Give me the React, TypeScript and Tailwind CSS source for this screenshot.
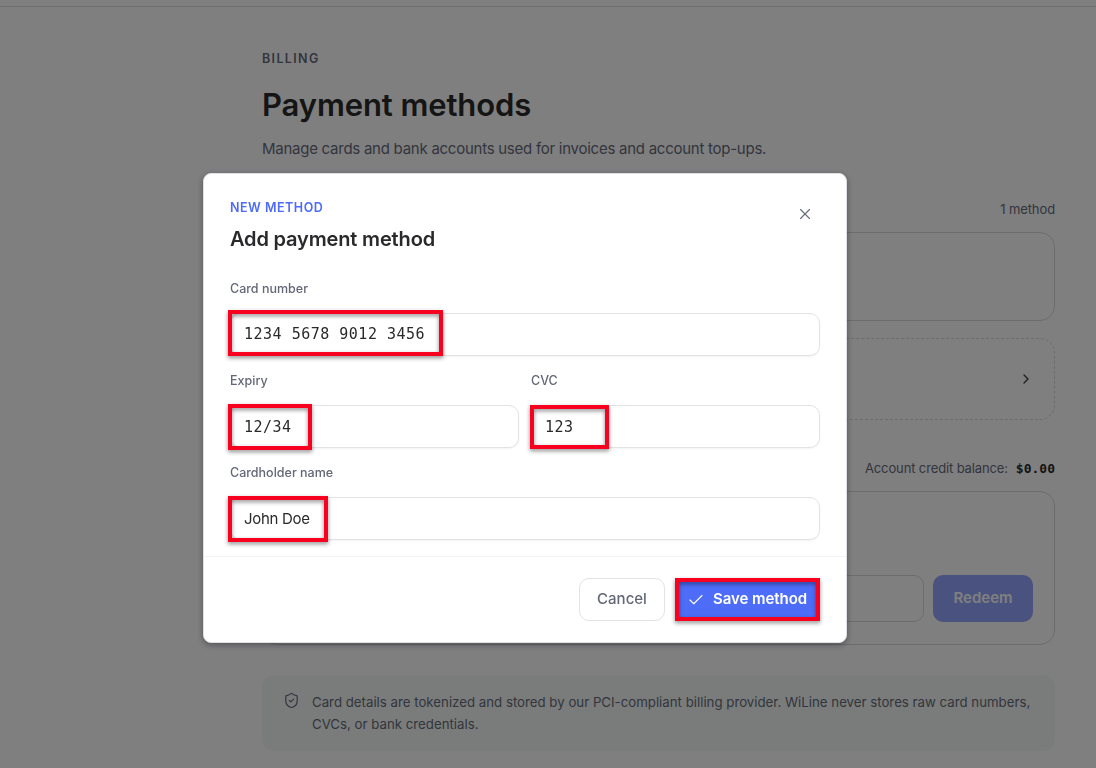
import type { ReactNode } from "react"
import { Check, ChevronRight, ShieldCheck, X } from "lucide-react"

function Highlight({ className }: { className: string }) {
  return (
    <div
      className={`pointer-events-none absolute border-4 border-[#f80020] drop-shadow-[0_2px_2px_rgba(0,0,0,0.45)] ${className}`}
    />
  )
}

function Field({ label, value, valueClass, children }: { label: ReactNode; value: string; valueClass: string; children: ReactNode }) {
  return (
    <div className="relative flex-1">
      <div className="h-[34px] pt-px text-[12.5px] leading-[18px] font-medium text-[#626776]">{label}</div>
      <div className="flex h-[43px] items-center rounded-[10px] border border-[#e2e2e7] px-[13px] text-[#2a2a2c] shadow-[0_1px_2px_rgba(0,0,0,0.05)]">
        <span className={valueClass}>{value}</span>
      </div>
      {children}
    </div>
  )
}

export default function App() {
  return (
    <div className="h-[768px] overflow-hidden bg-white font-['Inter',sans-serif] text-[#666b7a]">
      <div className="h-[7px] border-b border-[#dcdcdc]" />
      <main className="ml-[262px] w-[793px] pt-[42px]">
        <div className="h-[20px] text-[12.5px] leading-[20px] font-semibold tracking-[1.35px]">BILLING</div>
        <h1 className="mt-[16px] h-[40px] text-[31px] leading-[40px] font-semibold tracking-[-0.1px] text-[#2a2a2a]">Payment methods</h1>
        <p className="mt-[13px] text-[15px] leading-[22px] tracking-[-0.257px]">
          <span>Manage cards and bank accounts used for invoices and account top-ups.</span>
        </p>

        <div className="mt-[39px] flex h-[22px] items-center justify-end text-[13px] tracking-[-0.1px]">
          <span>1 method</span>
        </div>
        <div className="mt-[11px] h-[89px] rounded-[15px] border border-[#d8d8dc]" />
        <div className="mt-[17px] flex h-[82px] items-center justify-end rounded-[15px] border border-dashed border-[#d8d8dc] pr-[20px]">
          <ChevronRight size={16} strokeWidth={2} className="text-[#3c3f48]" />
        </div>

        <div className="mt-[38px] flex h-[22px] items-center justify-end text-[13px]">
          <span className="tracking-[-0.13px]">Account credit balance:</span>
          <span className="ml-[8px] font-['DejaVu_Sans_Mono',monospace] text-[13px] font-bold text-[#2a2a2a]">$0.00</span>
        </div>
        <div className="mt-[11px] flex h-[154px] items-end gap-[9px] rounded-[15px] border border-[#d8d8dc] px-[21px] pb-[22px]">
          <div className="h-[47px] flex-1 rounded-[10px] border border-[#d8d8dc]" />
          <div className="flex h-[47px] w-[100px] items-center justify-center rounded-[10px] bg-[#94a4fe] text-[15px] font-semibold text-white">
            <span>Redeem</span>
          </div>
        </div>

        <div className="mt-[30px] flex h-[76px] rounded-[12px] bg-[#f4f9f7] pl-[21px] pt-[16px]">
          <ShieldCheck size={17} strokeWidth={1.7} className="mt-[1px] shrink-0" />
          <p className="ml-[12px] text-[13.25px] leading-[22px] whitespace-nowrap">
            <span>Card details are tokenized and stored by our PCI-compliant billing provider. WiLine never stores raw card numbers,</span>
            <br />
            <span>CVCs, or bank credentials.</span>
          </p>
        </div>
      </main>

      <div className="fixed inset-0 bg-black/50 pt-[173px] pl-[203px]">
        <div className="h-[470px] w-[644px] rounded-[8px] border border-[#dfdfe5] bg-white shadow-[0_2px_6px_rgba(0,0,0,0.35)]">
          <div className="flex h-[105px] justify-between pt-[24px] pr-[32px] pl-[26px]">
            <div>
              <div className="h-[20px] text-[12.5px] leading-[20px] font-semibold tracking-[0.5px] text-[#4d6bf8]">NEW METHOD</div>
              <h2 className="mt-[6px] text-[20px] leading-[30px] font-semibold tracking-[-0.16px] text-[#2a2a2c]">
                <span>Add payment method</span>
              </h2>
            </div>
            <X size={18} strokeWidth={1.5} className="mt-[7px] text-[#666b7a]" />
          </div>

          <div className="flex h-[277px] flex-col gap-[15px] pr-[26px] pl-[26px]">
            <div className="flex">
              <Field label="Card number" value="1234 5678 9012 3456" valueClass="font-['DejaVu_Sans_Mono',monospace] text-[15px] tracking-[0.5px]">
                <Highlight className="top-[31px] left-[-2px] h-[46px] w-[215px]" />
              </Field>
            </div>
            <div className="flex gap-[12px]">
              <Field label="Expiry" value="12/34" valueClass="pt-[2px] font-['DejaVu_Sans_Mono',monospace] text-[15px] tracking-[0.5px]">
                <Highlight className="top-[33px] left-[-2px] h-[46px] w-[84px]" />
              </Field>
              <Field label="CVC" value="123" valueClass="pt-[2px] font-['DejaVu_Sans_Mono',monospace] text-[15px] tracking-[0.5px]">
                <Highlight className="top-[34px] left-[-1px] h-[44px] w-[79px]" />
              </Field>
            </div>
            <div className="flex">
              <Field label="Cardholder name" value="John Doe" valueClass="pt-[2px] text-[15px] tracking-[-0.3px]">
                <Highlight className="top-[33px] left-[-2px] h-[46px] w-[100px]" />
              </Field>
            </div>
          </div>

          <div className="flex justify-end gap-[10px] border-t border-[#f3f3f6] pt-[21px] pr-[26px]">
            <button className="h-[43px] w-[86px] rounded-[10px] border border-[#e2e2e7] text-[15px] font-medium text-[#626776]">
              <span>Cancel</span>
            </button>
            <button className="relative flex h-[43px] w-[145px] items-center bg-[#4d6df9] pl-[12px] text-[15px] font-semibold text-white">
              <Check size={18} strokeWidth={1.5} />
              <span className="ml-[8px] tracking-[-0.05px]">Save method</span>
              <Highlight className="inset-0" />
            </button>
          </div>
        </div>
      </div>
    </div>
  )
}
